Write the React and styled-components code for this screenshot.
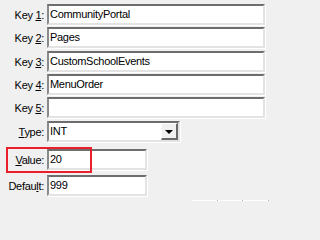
import styled, { createGlobalStyle } from 'styled-components';

const Global = createGlobalStyle`
  html, body {
    margin: 0;
    padding: 0;
    background: #f0f0f0;
  }
  body {
    width: 269px;
    height: 201px;
    overflow: hidden;
    font-family: "Liberation Sans", Arial, sans-serif;
    font-size: 11px;
    letter-spacing: -0.3px;
    color: #000;
  }
`

const Form = styled.div`
  padding-top: 4px;
  display: flex;
  flex-direction: column;
`
const Row = styled.div`
  position: relative;
  display: grid;
  grid-template-columns: 47px auto;
  align-items: center;
  justify-content: start;
  margin-top: ${p => p.$gap || 0}px;
`
const Label = styled.label`
  text-align: right;
  padding-right: 3px;
  white-space: nowrap;
  u {
    text-decoration: underline;
    text-underline-offset: 1px;
  }
`
const Field = styled.div`
  box-sizing: border-box;
  width: ${p => p.$width}px;
  height: 21px;
  background: #fff;
  border-style: solid;
  border-width: 2px;
  border-color: #6d6d6d #e3e3e3 #e3e3e3 #8a8a8a;
  box-shadow: 1px 1px 0 #fff;
  padding: 0 1px;
  display: flex;
  align-items: center;
  line-height: 1;
  white-space: nowrap;
  overflow: hidden;
`
const Select = styled(Field)`
  padding-right: 0;
  justify-content: space-between;
`
const DropButton = styled.div`
  box-sizing: border-box;
  width: 17px;
  height: 17px;
  background: #f0f0f0;
  border-style: solid;
  border-width: 1px 2px 2px 1px;
  border-color: #fff #696969 #696969 #fff;
  display: flex;
  align-items: center;
  justify-content: center;
`
const Arrow = styled.span`
  width: 0;
  height: 0;
  border-left: 4px solid transparent;
  border-right: 4px solid transparent;
  border-top: 4px solid #000;
  margin-top: 1px;
`
const Highlight = styled.div`
  position: absolute;
  left: 6px;
  top: -2px;
  width: 86px;
  height: 26px;
  box-sizing: border-box;
  border: 2px solid #e8202a;
  pointer-events: none;
`
const Buttons = styled.div`
  display: flex;
  margin: 4px 0 0 192px;
`
const Btn = styled.div`
  box-sizing: border-box;
  width: 26px;
  height: 10px;
  border-top: 1px solid #fff;
  border-left: 1px solid #fff;
  border-right: 1px solid #696969;
`

const keys = ['CommunityPortal', 'Pages', 'CustomSchoolEvents', 'MenuOrder', '']
const keyGaps = [0, 2, 3, 2, 2]

export default function App() {
  return (
    <>
      <Global />
      <Form>
        {keys.map((k, i) => (
          <Row key={i} $gap={keyGaps[i]}>
            <Label>Key <u>{i + 1}</u>:</Label>
            <Field $width={218}>{k}</Field>
          </Row>
        ))}
        <Row $gap={3}>
          <Label><u>T</u>ype:</Label>
          <Select $width={133}>
            INT
            <DropButton><Arrow /></DropButton>
          </Select>
        </Row>
        <Row $gap={7}>
          <Label><u>V</u>alue:</Label>
          <Field $width={100}>20</Field>
          <Highlight />
        </Row>
        <Row $gap={5}>
          <Label>Defau<u>l</u>t:</Label>
          <Field $width={100}>999</Field>
        </Row>
        <Buttons>
          <Btn />
          <Btn />
          <Btn />
        </Buttons>
      </Form>
    </>
  )
}
